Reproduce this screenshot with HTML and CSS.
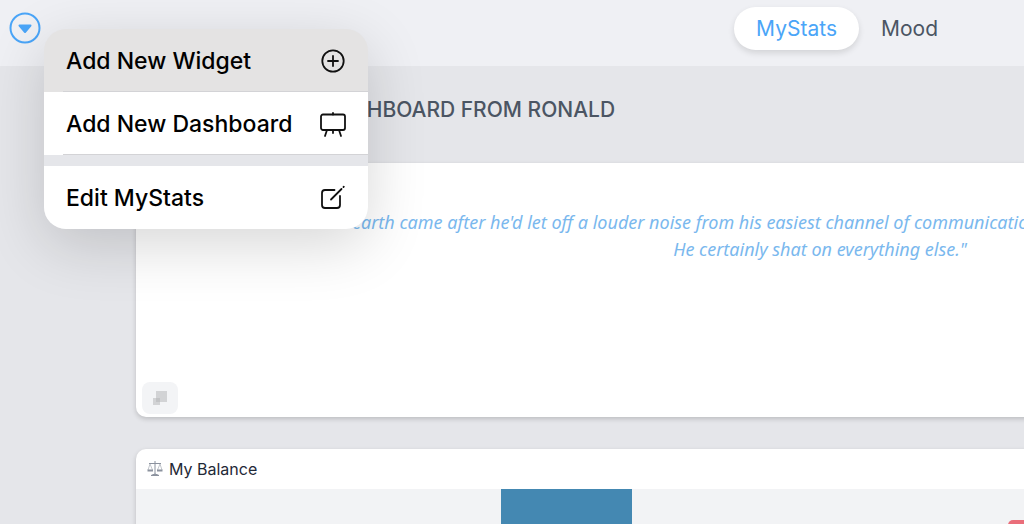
FILE: index.html
```html
<!DOCTYPE html>
<html lang="en">
<head>
    <meta charset="UTF-8">
    <meta name="viewport" content="width=device-width, initial-scale=1.0">
    <title>MyStats</title>
    <link rel="stylesheet" href="styles.css">
</head>
<body>
    <header class="topbar">
        <div class="dropdown">
            <button class="toggle" type="button" aria-label="Dashboard menu" aria-expanded="true">
                <svg width="32" height="32" viewBox="0 0 32 32">
                    <circle cx="16" cy="16" r="14.5" fill="none" stroke="#4aa5f8" stroke-width="2"/>
                    <path d="M10.5 13.5h11L16 20z" fill="#4aa5f8" stroke="#4aa5f8" stroke-width="2" stroke-linejoin="round"/>
                </svg>
            </button>
            <div class="menu">
                <button class="menu-item active" type="button">
                    Add New Widget
                    <svg width="28" height="28" viewBox="0 0 28 28">
                        <circle cx="14" cy="14" r="10.7"/>
                        <path d="M14 9v10M9 14h10"/>
                    </svg>
                </button>
                <button class="menu-item" type="button">
                    Add New Dashboard
                    <svg width="28" height="28" viewBox="0 0 28 28">
                        <rect x="2" y="4.500" width="24" height="15.500" rx="2"/>
                        <path d="M14 3v1.500M14 20v3M8 20l-2 6M20 20l2 6"/>
                    </svg>
                </button>
                <button class="menu-item" type="button">
                    Edit MyStats
                    <svg width="28" height="28" viewBox="0 0 28 28">
                        <path d="M15.500 6H6Q3 6 3 9v12q0 3 3 3h12q3 0 3-3v-9"/>
                        <path d="M12 15.500L22.500 5M24.500 3l.3-.3"/>
                    </svg>
                </button>
            </div>
        </div>
        <nav class="tabs">
            <a class="tab current" href="#mystats">MyStats</a>
            <a class="tab" href="#mood">Mood</a>
        </nav>
    </header>
    <main class="dashboard">
        <h1 class="title">DASHBOARD FROM RONALD</h1>
        <section class="card quote-card">
            <blockquote class="quote">
                <p class="first-line">earth came after he'd let off a louder noise from his easiest channel of communication.</p>
                <p>He certainly shat on everything else."</p>
            </blockquote>
            <button class="resize" type="button" aria-label="Resize widget">
                <svg width="16" height="16" viewBox="0 0 16 16">
                    <rect x="4" y="1" width="11" height="11" fill="#d2d3d5"/>
                    <rect x="1" y="8" width="7" height="7" fill="#d2d3d5"/>
                    <rect x="4" y="8" width="4" height="4" fill="#c2c3c5"/>
                </svg>
            </button>
        </section>
        <section class="card">
            <h2 class="card-title">
                <svg width="16" height="18" viewBox="0 0 16 18" fill="none" stroke="#8b929e">
                    <path d="M8 1v13M2 3.500h12" />
                    <path d="M3 4L1 10M3 4l2.500 6M13 4l-2.500 6M13 4l2 6" stroke="#c3c7cd"/>
                    <path d="M.5 10.500h5.500M10 10.500h5.500" stroke-width="2"/>
                    <path d="M4 15.500q4-3 8 0z" fill="#8b929e"/>
                </svg>
                My Balance
            </h2>
            <div class="chart">
                <div class="bar blue"></div>
                <div class="bar red"></div>
            </div>
        </section>
    </main>
</body>
</html>
```
FILE: styles.css
```css
* {
    padding: 0;
    margin: 0;
    box-sizing: border-box;
}
body {
    background-color: #e5e6ea;
    font-family: Inter, "Liberation Sans", sans-serif;
    color: #4b5563;
    overflow: hidden;
}
button {
    border: none;
    background: none;
    font: inherit;
    cursor: pointer;
}
svg {
    display: block;
}
.topbar {
    display: flex;
    justify-content: space-between;
    height: 66px;
    padding: 7px 64px 0 9px;
    background-color: #eff0f4;
}
.dropdown {
    position: relative;
    padding-top: 5px;
}
.menu {
    position: absolute;
    z-index: 10;
    left: 35px;
    top: 22px;
    width: 324px;
    border-radius: 22px;
    background-color: #e5e6ea;
    box-shadow: 0 16px 60px rgba(0, 0, 0, .16);
    overflow: hidden;
}
.menu-item {
    display: flex;
    align-items: center;
    justify-content: space-between;
    width: 100%;
    height: 63px;
    padding: 1px 21px 0 22px;
    /* divider that starts at the label, not at the menu edge */
    background: #fff linear-gradient(#d3d3d6, #d3d3d6) 19px 100% / 100% 1px no-repeat;
    color: #000;
    font-size: 23px;
    font-weight: 500;
    white-space: nowrap;
}
.menu-item:last-child {
    margin-top: 11px;
    background-image: none;
}
.menu-item.active {
    background-color: #e4e3e3;
}
.menu-item svg {
    fill: none;
    stroke: #111;
    stroke-width: 1.8;
    stroke-linecap: round;
}
.tabs {
    display: flex;
}
.tab {
    height: 43px;
    padding: 0 22px;
    border-radius: 22px;
    color: #4b5563;
    font-size: 21px;
    line-height: 43px;
    text-decoration: none;
}
.tab.current {
    background-color: #fff;
    color: #4aa5f8;
    box-shadow: 0 3px 6px rgba(0, 0, 0, .12);
}
/* the board is wider than small windows and is cut at the right edge */
.dashboard {
    min-width: 1640px;
    padding: 0 136px;
}
.title {
    padding: 28px 0 0 188px;
    height: 97px;
    font-size: 21px;
    font-weight: 500;
    line-height: 32px;
}
.card {
    margin-bottom: 32px;
    border-radius: 10px;
    background-color: #fff;
    box-shadow: 0 2px 5px rgba(0, 0, 0, .18);
    overflow: hidden;
}
.quote-card {
    display: flex;
    flex-direction: column;
    justify-content: space-between;
    height: 254px;
    padding: 46px 6px 3px;
}
.quote {
    color: #7ab8ee;
    font-family: "Noto Sans", sans-serif;
    font-size: 18px;
    font-style: italic;
    line-height: 27px;
    text-align: center;
}
.first-line {
    padding-left: 210px;
    text-align: left;
    white-space: nowrap;
}
.resize {
    display: flex;
    align-items: center;
    justify-content: center;
    width: 36px;
    height: 32px;
    border-radius: 8px;
    background-color: #f3f4f6;
}
.card-title {
    display: flex;
    align-items: center;
    gap: 6px;
    height: 40px;
    padding-left: 11px;
    color: #1f2937;
    font-size: 16px;
    font-weight: 400;
}
.chart {
    display: flex;
    gap: 376px;
    height: 300px;
    padding-left: 365px;
    background-color: #f2f3f5;
}
.bar {
    width: 131px;
}
.blue {
    background-color: #4488b2;
}
.red {
    margin-top: 31px;
    border-radius: 5px 5px 0 0;
    background-color: #ea6e7a;
}
```
